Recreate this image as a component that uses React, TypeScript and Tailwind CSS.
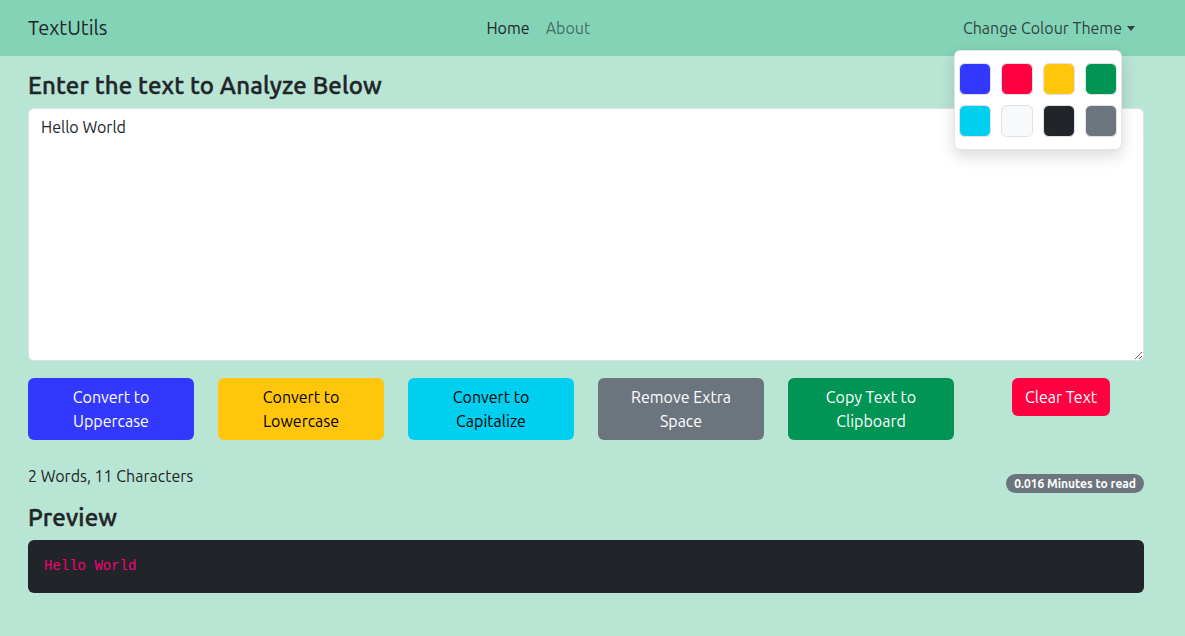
import React from "react";

const swatches = [
  "bg-[#3338ff]",
  "bg-[#ff0040]",
  "bg-[#ffc60b]",
  "bg-[#009554]",
  "bg-[#00cff0]",
  "bg-[#f8f9fa]",
  "bg-[#212529]",
  "bg-[#6c757d]",
];

export default function App() {
  return (
    <div
      className="min-h-[636px] bg-[#b9e5d4] text-[#212529]"
      style={{ fontFamily: "Ubuntu, Lato, 'Noto Sans', sans-serif" }}
    >
      <nav className="h-14 bg-[#83d3b6]">
        <div className="w-[1116px] ml-7 h-full flex items-center relative">
          <div className="text-[20px]">TextUtils</div>
          <div className="flex gap-4 text-[16px] ml-[379px]">
            <span className="text-[#212529]">Home</span>
            <span className="text-[#212529]/60">About</span>
          </div>
          <div className="ml-auto flex items-center pr-[9px] text-[16px] text-[#212529]/85">
            Change Colour Theme
            <span className="ml-[5px] inline-block w-0 h-0 border-l-[4px] border-r-[4px] border-t-[5px] border-l-transparent border-r-transparent border-t-[#212529]/85"></span>
          </div>
          <div className="absolute top-[50px] right-[22px] w-[168px] bg-white rounded-md border border-black/10 shadow-[0_6px_16px_rgba(0,0,0,0.15)] px-[4px] py-[12px] grid grid-cols-4 gap-[10px] z-10">
            {swatches.map((c, i) => (
              <div
                key={i}
                className={`w-[32px] h-[32px] rounded-md border border-[#dee2e6] ${c}`}
              ></div>
            ))}
          </div>
        </div>
      </nav>
      <div className="w-[1116px] ml-7">
        <h1 className="text-[24px] font-medium mt-[15px] mb-[8px] leading-[29px] tracking-[0.15px] [-webkit-text-stroke:0.45px_#212529]">
          Enter the text to Analyze Below
        </h1>
        <textarea
          className="w-full h-[253px] bg-white rounded-md border border-[#dee2e6] px-3 py-[6px] text-[16px] leading-6 block outline-none"
          defaultValue="Hello World"
        />
        <div className="grid grid-cols-6 gap-6 mt-[17px] text-[16px] leading-6">
          <button className="h-[62px] rounded-md bg-[#3338ff] text-white px-3">
            Convert to
            <br />
            Uppercase
          </button>
          <button className="h-[62px] rounded-md bg-[#ffc60b] text-black px-3">
            Convert to
            <br />
            Lowercase
          </button>
          <button className="h-[62px] rounded-md bg-[#00cff0] text-black px-3">
            Convert to
            <br />
            Capitalize
          </button>
          <button className="h-[62px] rounded-md bg-[#6c757d] text-white px-3">
            Remove Extra
            <br />
            Space
          </button>
          <button className="h-[62px] rounded-md bg-[#009554] text-white px-3">
            Copy Text to
            <br />
            Clipboard
          </button>
          <div className="flex justify-center items-start">
            <button className="h-[38px] rounded-md bg-[#ff0040] text-white px-[13px]">
              Clear Text
            </button>
          </div>
        </div>
        <div className="flex justify-between items-start mt-[24px]">
          <p className="text-[16px] leading-6">2 Words, 11 Characters</p>
          <span className="mt-[10px] rounded-full bg-[#6c757d] text-white text-[12px] font-bold px-[8px] h-[19px] flex items-center">
            0.016 Minutes to read
          </span>
        </div>
        <h2 className="text-[24px] font-medium leading-[29px] mt-[10px] mb-[8px] tracking-[0.15px] [-webkit-text-stroke:0.45px_#212529]">
          Preview
        </h2>
        <div className="bg-[#212529] rounded-md h-[53px] px-4 flex items-center">
          <code
            className="text-[14px] text-[#f5007a]"
            style={{ fontFamily: "'Liberation Mono', monospace" }}
          >
            Hello World
          </code>
        </div>
      </div>
    </div>
  );
}
